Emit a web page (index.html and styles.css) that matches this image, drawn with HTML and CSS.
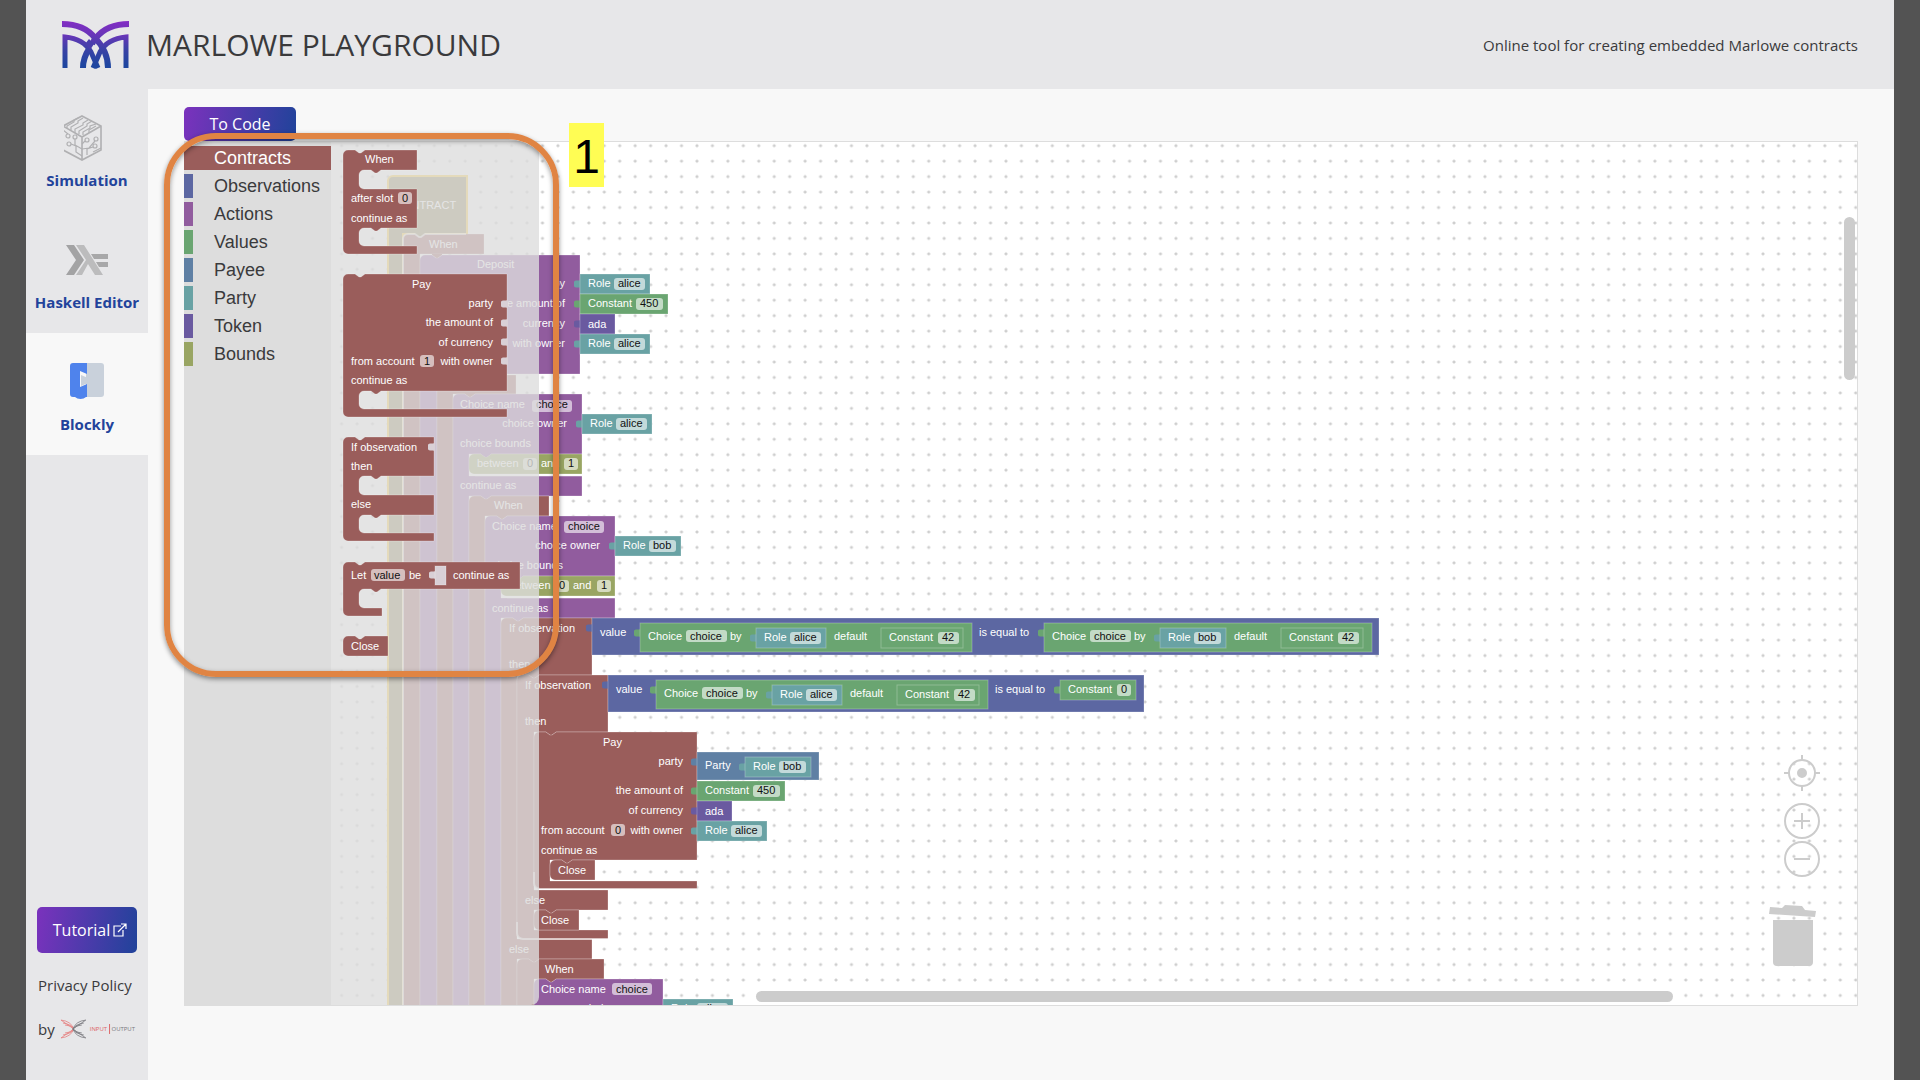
FILE: index.html
```html
<!DOCTYPE html>
<html lang="en">
<head>
<meta charset="utf-8">
<title>Marlowe Playground</title>
<link rel="stylesheet" href="styles.css">
</head>
<body>
<div class="app">
  <header class="header">
    <svg class="logo" width="67" height="48" viewBox="0 0 67 48" aria-hidden="true">
      <defs><linearGradient id="brand" gradientUnits="userSpaceOnUse" x1="0" y1="0" x2="0" y2="44"><stop offset="0" stop-color="#832dc4"/><stop offset=".3" stop-color="#6a35b9"/><stop offset=".65" stop-color="#3a42a6"/><stop offset="1" stop-color="#1f46a0"/></linearGradient></defs>
      <g fill="none" stroke="url(#brand)" stroke-width="6">
        <path d="M0 3C15 3 26 8 33 17 42 26 46 35 46 47"/>
        <path d="M67 3C52 3 41 8 34 17 32 19 31 21 30 23M27 28C23 34 21 40 21 47"/>
        <path d="M3 47V16C14 17 24 22 29 31L36 47" stroke-width="5"/>
        <path d="M64 47V16C53 17 43 22 38 31L31 47" stroke-width="5"/>
      </g>
      <path d="M23 23l4-5 5 5-4 6z" fill="#4a3eac"/>
    </svg>
    <h1 class="title">MARLOWE PLAYGROUND</h1>
    <p class="tagline">Online tool for creating embedded Marlowe contracts</p>
  </header>

  <div class="body">
    <aside class="sidebar">
      <nav class="tabs">
        <a class="tab" href="#simulation">
          <svg width="46" height="46" viewBox="0 0 46 46" fill="none" stroke="#b0b0b2" stroke-width="1.2" aria-hidden="true">
            <g transform="translate(-1 0)">
            <path d="M19 1l19 10v24L19 45 0 35V11zM0 11l19 11 19-11M19 22v23" stroke-width="1.6"/>
            <path d="M4 13v-2l7-4v-2l4-2M8 15v-3l7-4V6l5-3M12 18v-4l8-4V8l5-3M16 19v-3l8-5v-2l5-3M20 20v-3l7-4v-2l6-2M26 18v-3l7-4"/>
            <circle cx="5" cy="21" r="2"/><circle cx="12" cy="22" r="2"/><circle cx="6" cy="29" r="2"/><circle cx="24" cy="25" r="2"/><circle cx="33" cy="24" r="2"/><circle cx="32" cy="31" r="2"/>
            <path d="M0 15l5 4M12 24v6l7 4M8 29l5 2v6l6 4M19 29l3-3M19 34l7-1 6-7M24 40v-6l6-2M30 37l8-4"/>
            </g>
          </svg>
          <span>Simulation</span>
        </a>
        <a class="tab" href="#haskell">
          <svg width="46" height="46" viewBox="0 0 46 46" aria-hidden="true">
            <path d="M2 8h8l10 15-10 15H2l10-15z" fill="#a3a3a4"/>
            <path d="M12 8h8l19 30h-8l-7-11-6 11h-6l10-15z" fill="#bcbcbd"/>
            <path d="M27 17h17v5H30zM32 25h12v5h-9z" fill="#a8a8a9"/>
          </svg>
          <span>Haskell Editor</span>
        </a>
        <a class="tab tab-active" href="#blockly">
          <svg width="46" height="46" viewBox="0 0 46 46" aria-hidden="true">
            <path d="M22 4h15a3 3 0 0 1 3 3v28a3 3 0 0 1-3 3H22z" fill="#c9d1db"/>
            <path d="M9 4h14v11l-7-3v16l7-3v13h-1a7 5 0 0 1-11 0H9a3 3 0 0 1-3-3V7a3 3 0 0 1 3-3z" fill="#4f83ec"/>
            <path d="M17 16l7 3v5l-7 3z" fill="#c9d1db"/>
          </svg>
          <span>Blockly</span>
        </a>
      </nav>
      <div class="links">
        <a class="button tutorial" href="#tutorial">Tutorial<svg width="14" height="14" viewBox="0 0 14 14" fill="none" stroke="#fff" stroke-width="1.2" aria-hidden="true"><path d="M8 3H1v10h9V7M5 9l8-8M8 1h5v5"/></svg></a>
        <a class="link" href="#privacy">Privacy Policy</a>
        <a class="link maker" href="#maker">by
          <svg width="78" height="20" viewBox="0 0 78 20" aria-label="Input Output" role="img">
            <g fill="none" stroke-width=".8">
              <path d="M1 1q10 1 13 9Q11 18 1 19M3 4q8 1 11 6-3 5-11 6M5 6q6 0 9 4-3 4-9 4M1 1l13 9L1 19" stroke="#e58080"/>
              <path d="M26 1q-10 1-13 9 3 8 13 9M24 4q-8 1-11 6 3 5 11 6M22 6q-6 0-9 4 3 4 9 4M26 1L13 10l13 9" stroke="#77777c"/>
            </g>
            <text x="30" y="12" font-size="6" fill="#dd6666" class="maker-name">INPUT</text>
            <path d="M50 5v10" stroke="#dd6666"/>
            <text x="52" y="12" font-size="6" fill="#77777c" class="maker-name">OUTPUT</text>
          </svg>
        </a>
      </div>
    </aside>

    <main class="main">
      <button class="button to-code" type="button">To Code</button>
      <section class="workspace" aria-label="Blockly workspace">
        <svg class="canvas" aria-label="Contract blocks">
          <defs>
            <pattern id="dots" width="10" height="10" patternUnits="userSpaceOnUse" patternTransform="translate(-6 138) scale(1.545)"><path class="dot" d="M4 5h2M5 4v2"/></pattern>
            <path id="tab" d="M1 5c0 3-7 0-7 3v4c0 3 7 0 7 3z"/>
            <path id="notch" d="M0-1h10v1l-4 3h-2l-4-3z"/>
            <g id="role-alice" class="party"><use href="#tab"/><rect width="70" height="20"/><rect class="field" x="34" y="4" width="31" height="12"/><text x="8" y="13">Role</text><text class="dark" x="38" y="13">alice</text></g>
            <g id="role-bob" class="party"><use href="#tab"/><rect width="66" height="20"/><rect class="field" x="34" y="4" width="27" height="12"/><text x="8" y="13">Role</text><text class="dark" x="38" y="13">bob</text></g>
            <g id="constant-450" class="values"><use href="#tab"/><rect width="88" height="20"/><rect class="field" x="56" y="4" width="27" height="12"/><text x="8" y="13">Constant</text><text class="dark" x="60" y="13">450</text></g>
            <g id="constant-42" class="values"><use href="#tab"/><rect width="82" height="20"/><rect class="field" x="57" y="4" width="21" height="12"/><text x="8" y="13">Constant</text><text class="dark" x="61" y="13">42</text></g>
            <g id="ada" class="token"><use href="#tab"/><rect width="35" height="20"/><text x="8" y="14">ada</text></g>
          </defs>
          <g transform="translate(-184 -142)">
            <rect class="dots" x="184" y="142" width="100%" height="100%"/>

            <path class="root glow" d="M388 1020V181a5 5 0 0 1 5-5h74v58h-64v786z"/>
            <use class="root" href="#notch" x="415" y="234"/>
            <text x="395" y="209">CONTRACT</text>

            <path class="contract" d="M403 1020V239a5 5 0 0 1 5-5h7l4 3h2l4-3h59v20h-64v766z"/>
            <path class="rim" d="M403 1010V239a5 5 0 0 1 5-5h7l4 3h2l4-3h41"/>
            <use class="contract" href="#notch" x="432" y="255"/>
            <text x="429" y="248">When</text>

            <path class="actions" d="M420 1020V260a5 5 0 0 1 5-5h7l4 3h2l4-3h138v119h-143v646z"/>
            <text x="477" y="268">Deposit</text>
            <text class="end" x="565" y="287">by</text>
            <text class="end" x="565" y="307">the amount of</text>
            <text class="end" x="565" y="327">currency</text>
            <text class="end" x="565" y="347">with owner</text>
            <use href="#role-alice" x="580" y="274"/>
            <use href="#constant-450" x="580" y="294"/>
            <use href="#ada" x="580" y="314"/>
            <use href="#role-alice" x="580" y="334"/>

            <path class="contract" d="M437 1020V375h79v19h-63v626z"/>
            <use class="contract" href="#notch" x="465" y="394"/>

            <path class="actions" d="M453 1020V399a5 5 0 0 1 5-5h7l4 3h2l4-3h107v60h-113v22h113v20h-113v524z"/>
            <rect class="field" x="532" y="400" width="40" height="12"/>
            <text x="460" y="408">Choice name</text><text class="dark" x="536" y="408">choice</text>
            <text class="end" x="567" y="427">choice owner</text>
            <text x="460" y="447">choice bounds</text>
            <text x="460" y="489">continue as</text>
            <path class="gap" d="M471 472v-10h112v14H475z"/>
            <path class="bounds" d="M469 469v-10a5 5 0 0 1 5-5h7l4 3h2l4-3h91v20H474a5 5 0 0 1-5-5z"/>
            <use class="actions" href="#notch" x="481" y="454"/><use class="actions" href="#notch" x="481" y="496"/>
            <rect class="field" x="523" y="458" width="14" height="12"/><rect class="field" x="564" y="458" width="14" height="12"/>
            <text x="477" y="467">between</text><text class="dark" x="527" y="467">0</text><text x="541" y="467">and</text><text class="dark" x="568" y="467">1</text>
            <use href="#role-alice" x="582" y="414"/>

            <path class="contract" d="M469 1020V501a5 5 0 0 1 5-5h7l4 3h2l4-3h58v20h-64v504z"/>
            <use class="contract" href="#notch" x="497" y="516"/>
            <text x="494" y="509">When</text>

            <path class="actions" d="M485 1020V521a5 5 0 0 1 5-5h7l4 3h2l4-3h108v60h-114v22h114v20h-114v402z"/>
            <rect class="field" x="564" y="521" width="40" height="12"/>
            <text x="492" y="530">Choice name</text><text class="dark" x="568" y="530">choice</text>
            <text class="end" x="600" y="549">choice owner</text>
            <text x="492" y="569">choice bounds</text>
            <text x="492" y="612">continue as</text>
            <path class="gap" d="M503 594v-10h113v14H507z"/>
            <path class="bounds" d="M501 591v-10a5 5 0 0 1 5-5h7l4 3h2l4-3h92v20H506a5 5 0 0 1-5-5z"/>
            <use class="actions" href="#notch" x="513" y="576"/><use class="actions" href="#notch" x="513" y="618"/>
            <rect class="field" x="555" y="580" width="14" height="12"/><rect class="field" x="597" y="580" width="14" height="12"/>
            <text x="509" y="589">between</text><text class="dark" x="559" y="589">0</text><text x="573" y="589">and</text><text class="dark" x="601" y="589">1</text>
            <use href="#role-bob" x="615" y="536"/>

            <path class="contract" d="M501 1020V623a5 5 0 0 1 5-5h7l4 3h2l4-3h69v57h-75v264h75v20h-75v61z"/>
            <use class="contract" href="#notch" x="529" y="675"/><use class="contract" href="#notch" x="529" y="959"/>
            <text x="509" y="632">If observation</text><text x="509" y="668">then</text><text x="509" y="953">else</text>

            <g class="observations" transform="translate(592 618)">
              <use href="#tab"/><rect width="787" height="37"/>
              <text x="8" y="18">value</text><text x="387" y="18">is equal to</text>
            </g>
            <g class="values" transform="translate(640 623)">
              <use href="#tab"/><rect width="332" height="29"/><rect class="field" x="46" y="7" width="41" height="12"/>
              <text x="8" y="17">Choice</text><text class="dark" x="50" y="17">choice</text><text x="90" y="17">by</text><text x="194" y="17">default</text>
            </g>
            <use href="#role-alice" x="756" y="628"/><use href="#constant-42" x="881" y="628"/>
            <g class="values" transform="translate(1044 623)">
              <use href="#tab"/><rect width="328" height="29"/><rect class="field" x="46" y="7" width="41" height="12"/>
              <text x="8" y="17">Choice</text><text class="dark" x="50" y="17">choice</text><text x="90" y="17">by</text><text x="190" y="17">default</text>
            </g>
            <use href="#role-bob" x="1160" y="628"/><use href="#constant-42" x="1281" y="628"/>

            <path class="contract" d="M517 934V680a5 5 0 0 1 5-5h7l4 3h2l4-3h69v57h-74v158h74v20h-74v20h74v9H522a5 5 0 0 1-5-5z"/>
            <path class="rim" d="M517 922v11a6 6 0 0 0 6 6h85"/>
            <use class="contract" href="#notch" x="546" y="732"/><use class="contract" href="#notch" x="546" y="910"/>
            <text x="525" y="689">If observation</text><text x="525" y="725">then</text><text x="525" y="904">else</text>

            <g class="observations" transform="translate(608 675)">
              <use href="#tab"/><rect width="536" height="37"/>
              <text x="8" y="18">value</text><text x="387" y="18">is equal to</text>
            </g>
            <g class="values" transform="translate(656 680)">
              <use href="#tab"/><rect width="332" height="29"/><rect class="field" x="46" y="7" width="41" height="12"/>
              <text x="8" y="17">Choice</text><text class="dark" x="50" y="17">choice</text><text x="90" y="17">by</text><text x="194" y="17">default</text>
            </g>
            <use href="#role-alice" x="772" y="685"/><use href="#constant-42" x="897" y="685"/>
            <g class="values" transform="translate(1060 680)"><use href="#tab"/><rect width="76" height="20"/><rect class="field" x="57" y="4" width="14" height="12"/><text x="8" y="13">Constant</text><text class="dark" x="61" y="13">0</text></g>

            <path class="contract" d="M534 884V737a5 5 0 0 1 5-5h7l4 3h2l4-3h141v128H550v21h147v8H539a5 5 0 0 1-5-5z"/>
            <path class="rim" d="M534 872v11a6 6 0 0 0 6 6h157"/>
            <use class="contract" href="#notch" x="562" y="860"/>
            <rect class="field" x="611" y="824" width="14" height="12"/>
            <text x="603" y="746">Pay</text>
            <text class="end" x="683" y="765">party</text>
            <text class="end" x="683" y="794">the amount of</text>
            <text class="end" x="683" y="814">of currency</text>
            <text x="541" y="834">from account</text><text class="dark" x="615" y="834">0</text><text class="end" x="683" y="834">with owner</text>
            <text x="541" y="854">continue as</text>
            <g class="payee" transform="translate(697 752)"><use href="#tab"/><rect width="122" height="28"/><text x="8" y="17">Party</text></g>
            <use href="#role-bob" x="745" y="757"/>
            <use href="#constant-450" x="697" y="781"/>
            <use href="#ada" x="697" y="801"/>
            <use href="#role-alice" x="697" y="821"/>

            <path class="contract" d="M550 875v-10a5 5 0 0 1 5-5h7l4 3h2l4-3h23v20h-40a5 5 0 0 1-5-5z"/>
            <text x="558" y="874">Close</text>
            <path class="contract" d="M534 925v-10a5 5 0 0 1 5-5h7l4 3h2l4-3h23v20h-40a5 5 0 0 1-5-5z"/>
            <text x="541" y="924">Close</text>

            <path class="contract" d="M517 1020V964a5 5 0 0 1 5-5h7l4 3h2l4-3h65v20h-70v41z"/>
            <use class="contract" href="#notch" x="546" y="979"/>
            <text x="545" y="973">When</text>
            <path class="actions" d="M534 1020V984a5 5 0 0 1 5-5h7l4 3h2l4-3h107v41z"/>
            <rect class="field" x="612" y="983" width="40" height="12"/>
            <text x="541" y="993">Choice name</text><text class="dark" x="616" y="993">choice</text>
            <text class="end" x="648" y="1012">choice owner</text>
            <use href="#role-alice" x="663" y="999"/>
          </g>
        </svg>

        <nav class="toolbox" aria-label="Block categories">
          <a class="category contracts" href="#contracts">Contracts</a>
          <a class="category observations" href="#observations">Observations</a>
          <a class="category actions" href="#actions">Actions</a>
          <a class="category values" href="#values">Values</a>
          <a class="category payee" href="#payee">Payee</a>
          <a class="category party" href="#party">Party</a>
          <a class="category token" href="#token">Token</a>
          <a class="category bounds" href="#bounds">Bounds</a>
        </nav>

        <div class="flyout">
          <svg class="canvas" aria-label="Contract templates">
            <g transform="translate(-331 -142)">
              <path class="contract" d="M343 249V155a5 5 0 0 1 5-5h7l4 3h2l4-3h52v20h-36l-4 3h-2l-4-3h-7a5 5 0 0 0-5 5v9a5 5 0 0 0 5 5h53v39h-36l-4 3h-2l-4-3h-7a5 5 0 0 0-5 5v8a5 5 0 0 0 5 5h53v8h-69a5 5 0 0 1-5-5z"/>
              <rect class="field" x="398" y="192" width="14" height="12"/>
              <text x="365" y="163">When</text><text x="351" y="202">after slot</text><text class="dark" x="402" y="202">0</text><text x="351" y="222">continue as</text>

              <path class="contract" d="M343 412V279a5 5 0 0 1 5-5h7l4 3h2l4-3h142v117H381l-4 3h-2l-4-3h-7a5 5 0 0 0-5 5v8a5 5 0 0 0 5 5h143v8H348a5 5 0 0 1-5-5z"/>
              <g class="socket"><use href="#tab" x="507" y="294"/><use href="#tab" x="507" y="313"/><use href="#tab" x="507" y="332"/><use href="#tab" x="507" y="351"/></g>
              <rect class="field" x="420" y="355" width="14" height="12"/>
              <text x="412" y="288">Pay</text>
              <text class="end" x="493" y="307">party</text><text class="end" x="493" y="326">the amount of</text><text class="end" x="493" y="346">of currency</text>
              <text x="351" y="365">from account</text><text class="dark" x="424" y="365">1</text><text class="end" x="493" y="365">with owner</text><text x="351" y="384">continue as</text>

              <path class="contract" d="M343 536V442a5 5 0 0 1 5-5h7l4 3h2l4-3h69v39h-53l-4 3h-2l-4-3h-7a5 5 0 0 0-5 5v9a5 5 0 0 0 5 5h70v20h-53l-4 3h-2l-4-3h-7a5 5 0 0 0-5 5v8a5 5 0 0 0 5 5h70v8h-86a5 5 0 0 1-5-5z"/>
              <use class="socket" href="#tab" x="434" y="437"/>
              <text x="351" y="451">If observation</text><text x="351" y="470">then</text><text x="351" y="508">else</text>

              <path class="contract" d="M343 611v-44a5 5 0 0 1 5-5h7l4 3h2l4-3h155v27H381l-4 3h-2l-4-3h-7a5 5 0 0 0-5 5v9a5 5 0 0 0 5 5h18v8h-34a5 5 0 0 1-5-5z"/>
              <g class="socket"><use href="#tab" x="435" y="565"/><rect x="435" y="566" width="11" height="19"/></g>
              <rect class="field" x="371" y="569" width="34" height="12"/>
              <text x="351" y="579">Let</text><text class="dark" x="374" y="579">value</text><text x="409" y="579">be</text><text x="453" y="579">continue as</text>

              <path class="contract" d="M343 651v-10a5 5 0 0 1 5-5h7l4 3h2l4-3h23v20h-40a5 5 0 0 1-5-5z"/>
              <text x="351" y="650">Close</text>
            </g>
          </svg>
        </div>

        <div class="scroll scroll-vertical"></div>
        <div class="scroll scroll-horizontal"></div>
        <div class="controls">
          <button type="button" aria-label="Center"><svg width="36" height="36" viewBox="0 0 36 36"><circle cx="18" cy="18" r="13"/><circle class="solid" cx="18" cy="18" r="4"/><path d="M18 0v5M18 31v5M0 18h5M31 18h5"/></svg></button>
          <button class="zoom-in" type="button" aria-label="Zoom in"><svg width="36" height="36" viewBox="0 0 36 36"><circle cx="18" cy="18" r="17"/><path d="M10 18h16M18 10v16"/></svg></button>
          <button type="button" aria-label="Zoom out"><svg width="36" height="36" viewBox="0 0 36 36"><circle cx="18" cy="18" r="17"/><path d="M10 18h16"/></svg></button>
        </div>
        <svg class="trash" width="48" height="64" viewBox="0 0 48 64" role="img" aria-label="Trash"><path d="M1 4l12 1 3-3 17 1 3 4 11 1-1 6L0 11zM4 17h40v42a4 4 0 0 1-4 4H8a4 4 0 0 1-4-4z"/></svg>

        <div class="callout"></div>
        <div class="callout-number">1</div>
      </section>
    </main>
  </div>
</div>
</body>
</html>
```
FILE: styles.css
```css
* { box-sizing: border-box; }

body {
  margin: 0;
  background: #535353;
  color: #3a3a3c;
  font: 15px/24px "Open Sans", sans-serif;
}

a { color: inherit; text-decoration: none; }

.app {
  display: flex;
  flex-direction: column;
  min-height: 100vh;
  margin: 0 26px;
  background: #f8f8f8;
}

.header {
  display: flex;
  align-items: center;
  gap: 17px;
  height: 89px;
  padding: 0 36px;
  background: #e7e7e9;
}

.title { margin: 0; font-size: 30px; font-weight: 400; line-height: 40px; }
.tagline { margin: 0 0 0 auto; }

.body { display: flex; flex: 1; }

.sidebar {
  display: flex;
  flex-direction: column;
  justify-content: space-between;
  width: 122px;
  background: #e7e7e9;
}

.tab {
  display: flex;
  flex-direction: column;
  align-items: center;
  gap: 7px;
  height: 122px;
  padding-top: 26px;
  color: #22439b;
  font-weight: 700;
  white-space: nowrap;
}
.tab-active { background: #f8f8f8; }

.links {
  display: flex;
  flex-direction: column;
  gap: 20px;
  padding: 0 11px 39px;
}

.button {
  display: flex;
  align-items: center;
  justify-content: center;
  border: 0;
  border-radius: 5px;
  background: linear-gradient(100deg, #7b32bd, #20439a);
  color: #fff;
  font: 16px/24px "Open Sans", sans-serif;
}
.tutorial { gap: 3px; height: 46px; padding-left: 6px; }
.to-code { width: 112px; height: 34px; }

.link { padding-left: 1px; white-space: nowrap; }
.maker { display: flex; align-items: center; gap: 5px; }
.maker-name { font-family: "Open Sans", sans-serif; }

.main {
  display: flex;
  flex: 1;
  flex-direction: column;
  padding: 18px 36px 74px;
}

/* Workspace */
.workspace {
  position: relative;
  flex: 1;
  border: 1px solid #ddd;
  border-width: 1px 1px 1px 0;
  background: #fff;
}

.canvas {
  position: absolute;
  inset: 0;
  width: 100%;
  height: 100%;
  font: 11px "Liberation Sans", Arial, sans-serif;
}
.canvas text { fill: #fff; stroke: none; }
.canvas text.dark { fill: #111; }
.canvas text.end { text-anchor: end; }
.canvas path, .canvas rect { stroke: rgba(255, 255, 255, 0.25); }
.canvas .dots { fill: url(#dots); stroke: none; }
.canvas .dot { stroke: #ccc; stroke-width: 1px; }
.canvas .field { fill: #fff; fill-opacity: 0.6; stroke: none; rx: 3px; }
.canvas .gap { fill: #fff; }
.canvas .rim { fill: none; stroke: rgba(255, 255, 255, 0.6); stroke-width: 2px; }
.canvas .glow { stroke: #fc3; stroke-width: 2px; }
.canvas #tab, .canvas #notch { stroke: none; }

.root { fill: #8d8350; }
.contract { fill: #9a5d5b; }
.observations { fill: #5c67a2; }
.actions { fill: #915c9e; }
.values { fill: #6aa571; }
.payee { fill: #5f80a4; }
.party { fill: #69a2a4; }
.token { fill: #6a5aa0; }
.bounds { fill: #99a563; }
.socket { fill: #d9d0d6; }

.toolbox {
  position: absolute;
  top: 0;
  bottom: 0;
  left: 0;
  width: 147px;
  padding-top: 4px;
  background: #ddd;
  font: 18px/25px "Liberation Sans", Arial, sans-serif;
}
.category {
  display: block;
  height: 24px;
  margin-bottom: 4px;
  padding-left: 21px;
  border-left: 9px solid;
}
.category.contracts { border-color: #9a5d5b; background: #9a5d5b; color: #fff; }
.category.observations { border-color: #5c67a2; }
.category.actions { border-color: #915c9e; }
.category.values { border-color: #6aa571; }
.category.payee { border-color: #5f80a4; }
.category.party { border-color: #69a2a4; }
.category.token { border-color: #6a5aa0; }
.category.bounds { border-color: #99a563; }

.flyout {
  position: absolute;
  top: 0;
  bottom: 0;
  left: 147px;
  width: 208px;
  border-radius: 0 8px 8px 0;
  background: rgba(221, 221, 221, 0.8);
}

.scroll { position: absolute; border-radius: 6px; background: #ccc; }
.scroll-vertical { top: 75px; right: 2px; width: 11px; height: 163px; }
.scroll-horizontal { bottom: 3px; left: 572px; right: 184px; height: 11px; }

.controls {
  position: absolute;
  right: 37px;
  bottom: 128px;
  display: flex;
  flex-direction: column;
  gap: 2px;
}
.controls button { padding: 0; border: 0; background: none; }
.controls .zoom-in { margin-top: 10px; }
.controls svg { display: block; fill: none; stroke: #ccc; stroke-width: 2px; }
.controls .solid { fill: #ccc; }
.trash { position: absolute; right: 40px; bottom: 38px; fill: #ccc; }

/* Annotation over the toolbox */
.callout {
  position: absolute;
  top: -9px;
  left: -20px;
  width: 395px;
  height: 544px;
  border: 6px solid #e08443;
  border-radius: 52px;
  box-shadow: 0 2px 5px rgba(0, 0, 0, 0.45), inset 0 2px 5px rgba(0, 0, 0, 0.4);
}
.callout-number {
  position: absolute;
  top: -19px;
  left: 385px;
  width: 35px;
  height: 64px;
  background: #fffd54;
  color: #000;
  font: 48px/68px "Liberation Sans", Arial, sans-serif;
  text-align: center;
}
```
